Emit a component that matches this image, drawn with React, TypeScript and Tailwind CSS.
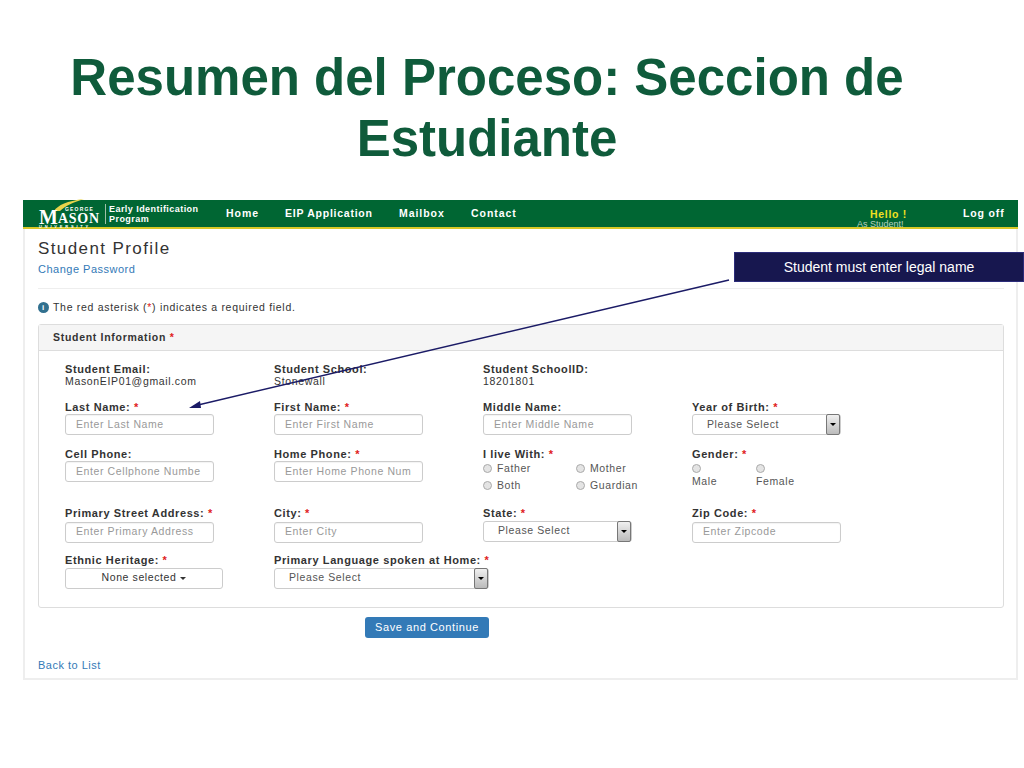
const Star = () => <span className="text-[#e02020]"> *</span>;

function Label({ text, req }: { text: string; req?: boolean }) {
  return (
    <div className="h-[13px] text-[11px] leading-[13px] font-bold tracking-[0.6px] text-[#333] whitespace-nowrap">
      {text}:{req && <Star />}
    </div>
  );
}

function TextInput({ placeholder, tight }: { placeholder: string; tight?: boolean }) {
  return (
    <div className={`flex h-[21px] w-[149px] items-center overflow-hidden rounded-[3px] border border-[#ccc] pl-[10px] text-[10.5px] tracking-[0.6px] whitespace-nowrap text-[#999] shadow-[inset_0_1px_1px_rgba(0,0,0,0.05)] ${tight ? "" : "mt-[2px]"}`}>
      {placeholder}
    </div>
  );
}

function SelectBox({ text, width, tight }: { text: string; width: string; tight?: boolean }) {
  return (
    <div className={`flex h-[21px] items-center justify-between rounded-[3px] border border-[#ccc] pl-[14px] text-[10.5px] tracking-[0.6px] text-[#555] ${width} ${tight ? "" : "mt-[1px]"}`}>
      <span>{text}</span>
      <span className="flex h-[21px] w-[14px] items-center justify-center rounded-[2px] border border-[#777] bg-gradient-to-b from-[#f0f0f0] to-[#bbb]">
        <span className="h-0 w-0 border-x-[3px] border-t-[3px] border-x-transparent border-t-black" />
      </span>
    </div>
  );
}

function Radio({ text }: { text?: string }) {
  return (
    <span className="flex items-center gap-[5px] text-[10.5px] tracking-[0.6px] text-[#555]">
      <span className="h-[9px] w-[9px] rounded-full border border-[#aaa] bg-[#e4e4e4]" />
      {text}
    </span>
  );
}

function Logo() {
  return (
    <div className="relative h-[27px] w-[66px] shrink-0 text-white">
      <svg className="absolute top-[-1px] left-[14px]" width="34" height="12" viewBox="0 0 34 12">
        <path d="M1 12C5 6 14 2 31 0C21 3 12 7 7 12Z" fill="#e8d44a" />
      </svg>
      <span className="absolute top-[10px] left-0 font-['Liberation_Serif',serif] text-[20px] leading-[15px] font-bold whitespace-nowrap">M</span>
      <span className="absolute top-[12px] left-[19px] font-['Liberation_Serif',serif] text-[14px] leading-[13px] font-bold tracking-[0.7px] whitespace-nowrap">ASON</span>
      <span className="absolute top-[7px] left-[26px] text-[5px] leading-[5px] font-bold tracking-[1.2px]">GEORGE</span>
      <span className="absolute top-[25px] left-0 text-[4px] leading-[3px] font-bold tracking-[2.8px]">UNIVERSITY</span>
    </div>
  );
}

function NavLink({ text, width, track }: { text: string; width: string; track: string }) {
  return <span className={`text-[10.5px] font-bold whitespace-nowrap ${track} ${width}`}>{text}</span>;
}

export default function App() {
  return (
    <div className="relative h-[768px] w-[1024px] overflow-hidden bg-white font-['Liberation_Sans',Arial,sans-serif]">
      <h1 className="ml-[-25px] w-[1024px] pt-[47px] text-center text-[51px] leading-[61px] font-bold text-[#0f5b3b]">
        Resumen del Proceso: Seccion de
        <br />
        Estudiante
      </h1>

      <div className="mt-[31px] ml-[23px] w-[995px]">
        <div className="flex h-[29px] items-center border-b-2 border-[#d8c828] bg-[#006633] pl-[16px] text-white">
          <Logo />
          <div className="h-[20px] w-px bg-[#9fc0a8]" />
          <div className="ml-[3px] w-[117px] text-[9px] leading-[10px] font-bold tracking-[0.45px]">
            Early Identification
            <br />
            Program
          </div>
          <NavLink text="Home" width="w-[59px]" track="tracking-[0.95px]" />
          <NavLink text="EIP Application" width="w-[114px]" track="tracking-[0.75px]" />
          <NavLink text="Mailbox" width="w-[72px]" track="tracking-[0.95px]" />
          <NavLink text="Contact" width="w-[399px]" track="tracking-[0.95px]" />
          <div className="relative w-[93px]">
            <span className="block text-[10.5px] leading-[12px] font-bold tracking-[0.7px] text-[#f0e020]">Hello !</span>
            <span className="absolute top-[11px] left-[-13px] text-[9px] leading-[10px] whitespace-nowrap text-[#b8d0c0]">As Student!</span>
          </div>
          <NavLink text="Log off" width="w-auto" track="tracking-[0.85px]" />
        </div>

        <div className="h-[451px] border-x-2 border-b-2 border-[#eee] pt-[11px] pr-[12px] pl-[13px]">
          <h2 className="text-[17px] leading-[18px] tracking-[1.4px] text-[#333]">Student Profile</h2>
          <a className="mt-[5px] block text-[11px] leading-[13px] tracking-[0.5px] text-[#337ab7]">Change Password</a>
          <div className="mt-[12px] h-px bg-[#eee]" />
          <div className="mt-[12px] flex h-[13px] items-center gap-[4px] text-[10.5px] tracking-[0.7px] text-[#333]">
            <span className="flex h-[11px] w-[11px] items-center justify-center rounded-full bg-[#31708f] text-[8px] leading-none font-bold text-white">i</span>
            <span>
              The red asterisk (<span className="text-[#e02020]">*</span>) indicates a required field.
            </span>
          </div>

          <div className="mt-[10px] h-[284px] rounded-[3px] border border-[#ddd]">
            <div className="flex h-[26px] items-center border-b border-[#ddd] bg-[#f5f5f5] pl-[14px] text-[10.5px] font-bold tracking-[0.7px] text-[#333]">
              Student Information&nbsp;<span className="text-[#e02020]">*</span>
            </div>

            <div className="grid grid-cols-[209px_209px_209px_209px] pl-[26px]">
              <div className="mt-[12px]">
                <div className="h-[12px] text-[11px] leading-[12px] font-bold tracking-[0.6px] text-[#333]">Student Email:</div>
                <div className="text-[10.5px] leading-[12px] tracking-[0.65px] text-[#333]">MasonEIP01@gmail.com</div>
              </div>
              <div className="mt-[12px]">
                <div className="h-[12px] text-[11px] leading-[12px] font-bold tracking-[0.6px] text-[#333]">Student School:</div>
                <div className="text-[10.5px] leading-[12px] tracking-[0.65px] text-[#333]">Stonewall</div>
              </div>
              <div className="col-span-2 mt-[12px]">
                <div className="h-[12px] text-[11px] leading-[12px] font-bold tracking-[0.6px] text-[#333]">Student SchoolID:</div>
                <div className="text-[10.5px] leading-[12px] tracking-[0.65px] text-[#333]">18201801</div>
              </div>

              <div className="mt-[14px]"><Label text="Last Name" req /><TextInput tight placeholder="Enter Last Name" /></div>
              <div className="mt-[14px]"><Label text="First Name" req /><TextInput tight placeholder="Enter First Name" /></div>
              <div className="mt-[14px]"><Label text="Middle Name" /><TextInput tight placeholder="Enter Middle Name" /></div>
              <div className="mt-[14px]"><Label text="Year of Birth" req /><SelectBox tight text="Please Select" width="w-[149px]" /></div>

              <div className="mt-[13px]"><Label text="Cell Phone" /><TextInput tight placeholder="Enter Cellphone Numbe" /></div>
              <div className="mt-[13px]"><Label text="Home Phone" req /><TextInput tight placeholder="Enter Home Phone Num" /></div>
              <div className="mt-[13px]">
                <Label text="I live With" req />
                <div className="grid w-[190px] grid-cols-[93px_93px] gap-y-[1px]">
                  <Radio text="Father" />
                  <Radio text="Mother" />
                  <Radio text="Both" />
                  <Radio text="Guardian" />
                </div>
              </div>
              <div className="mt-[13px]">
                <Label text="Gender" req />
                <div className="mt-[3px] grid grid-cols-[64px_64px] text-[10.5px] tracking-[0.6px] text-[#555]">
                  <div>
                    <Radio />
                    <div className="mt-[1px]">Male</div>
                  </div>
                  <div>
                    <Radio />
                    <div className="mt-[1px]">Female</div>
                  </div>
                </div>
              </div>

              <div className="mt-[13px]"><Label text="Primary Street Address" req /><TextInput placeholder="Enter Primary Address" /></div>
              <div className="mt-[13px]"><Label text="City" req /><TextInput placeholder="Enter City" /></div>
              <div className="mt-[13px]"><Label text="State" req /><SelectBox text="Please Select" width="w-[149px]" /></div>
              <div className="mt-[13px]"><Label text="Zip Code" req /><TextInput placeholder="Enter Zipcode" /></div>

              <div className="mt-[11px]">
                <Label text="Ethnic Heritage" req />
                <div className="mt-[1px] flex h-[21px] w-[158px] items-center justify-center gap-[4px] rounded-[3px] border border-[#ccc] text-[10.5px] tracking-[0.6px] text-[#333]">
                  None selected
                  <span className="h-0 w-0 border-x-[3px] border-t-[3px] border-x-transparent border-t-[#333]" />
                </div>
              </div>
              <div className="col-span-3 mt-[11px]">
                <Label text="Primary Language spoken at Home" req />
                <SelectBox text="Please Select" width="w-[215px]" />
              </div>
            </div>
          </div>

          <div className="mt-[9px] ml-[327px] flex h-[21px] w-[124px] items-center justify-center rounded-[3px] bg-[#337ab7] text-[11px] tracking-[0.6px] text-white">
            Save and Continue
          </div>
          <a className="mt-[21px] block text-[11px] leading-[13px] tracking-[0.5px] text-[#337ab7]">Back to List</a>
        </div>
      </div>

      <div className="absolute top-[252px] left-[734px] flex h-[30px] w-[290px] items-center justify-center border border-[#2c2c7a] bg-[#17174f] text-[14px] text-white">
        Student must enter legal name
      </div>
      <svg className="absolute top-0 left-0" width="1024" height="768" viewBox="0 0 1024 768">
        <line x1="729" y1="280" x2="198" y2="405" stroke="#1b1b66" strokeWidth="1.5" />
        <path d="M189 408L200 401L201 408Z" fill="#1b1b66" />
      </svg>
    </div>
  );
}
